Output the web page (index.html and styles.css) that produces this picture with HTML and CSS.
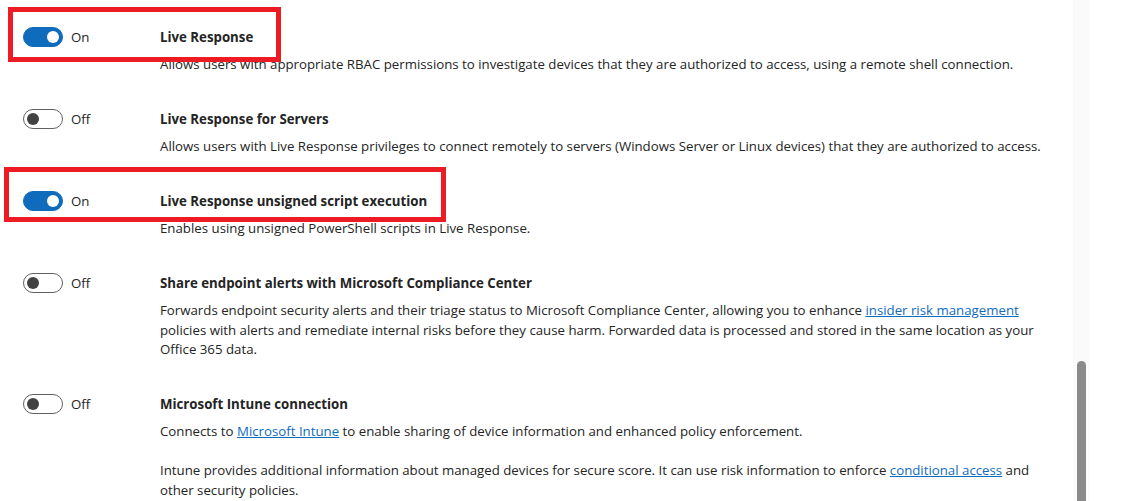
FILE: index.html
```html
<!DOCTYPE html>
<html lang="en">
<head>
<meta charset="utf-8">
<title>Advanced features</title>
<link rel="stylesheet" href="styles.css">
</head>
<body>
<div class="layout">
  <main class="settings">
    <section class="setting">
      <div class="highlight highlight-first"></div>
      <div class="switch-col">
        <span class="switch is-on"><span class="knob"></span></span>
        <span class="switch-label">On</span>
      </div>
      <div class="setting-body">
        <h3 class="setting-title">Live Response</h3>
        <p class="setting-desc">Allows users with appropriate RBAC permissions to investigate devices that they are authorized to access, using a remote shell connection.</p>
      </div>
    </section>

    <section class="setting">
      <div class="switch-col">
        <span class="switch"><span class="knob"></span></span>
        <span class="switch-label">Off</span>
      </div>
      <div class="setting-body">
        <h3 class="setting-title">Live Response for Servers</h3>
        <p class="setting-desc">Allows users with Live Response privileges to connect remotely to servers (Windows Server or Linux devices) that they are authorized to access.</p>
      </div>
    </section>

    <section class="setting">
      <div class="highlight highlight-second"></div>
      <div class="switch-col">
        <span class="switch is-on"><span class="knob"></span></span>
        <span class="switch-label">On</span>
      </div>
      <div class="setting-body">
        <h3 class="setting-title">Live Response unsigned script execution</h3>
        <p class="setting-desc">Enables using unsigned PowerShell scripts in Live Response.</p>
      </div>
    </section>

    <section class="setting">
      <div class="switch-col">
        <span class="switch"><span class="knob"></span></span>
        <span class="switch-label">Off</span>
      </div>
      <div class="setting-body">
        <h3 class="setting-title">Share endpoint alerts with Microsoft Compliance Center</h3>
        <p class="setting-desc">Forwards endpoint security alerts and their triage status to Microsoft Compliance Center, allowing you to enhance <a href="#">insider risk management</a> policies with alerts and remediate internal risks before they cause harm. Forwarded data is processed and stored in the same location as your Office 365 data.</p>
      </div>
    </section>

    <section class="setting">
      <div class="switch-col">
        <span class="switch"><span class="knob"></span></span>
        <span class="switch-label">Off</span>
      </div>
      <div class="setting-body">
        <h3 class="setting-title">Microsoft Intune connection</h3>
        <p class="setting-desc">Connects to <a href="#">Microsoft Intune</a> to enable sharing of device information and enhanced policy enforcement.</p>
        <p class="setting-desc setting-desc-extra">Intune provides additional information about managed devices for secure score. It can use risk information to enforce <a href="#">conditional access</a> and<br>other security policies.</p>
      </div>
    </section>
  </main>
  <div class="scrollbar"><div class="scroll-thumb"></div></div>
</div>
</body>
</html>
```
FILE: styles.css
```css
* { box-sizing: border-box; }
html, body {
  margin: 0;
  padding: 0;
  background: #ffffff;
  height: 100%;
  overflow: hidden;
}
body {
  font-family: "Segoe UI", "Open Sans", "Noto Sans", sans-serif;
  font-size: 13.25px;
  color: #242424;
}
.layout {
  display: flex;
  height: 501px;
}
.settings {
  flex: 1;
  padding: 27px 0 0 23px;
}
.setting {
  position: relative;
  display: flex;
  margin-bottom: 34.5px;
}
.switch-col {
  width: 137px;
  flex: none;
  display: flex;
  align-items: center;
  gap: 8px;
  height: 20px;
}
.switch {
  width: 40px;
  height: 20px;
  border-radius: 10px;
  border: 1px solid #616161;
  background: #ffffff;
  display: flex;
  align-items: center;
  padding: 0 3px;
}
.knob {
  width: 12px;
  height: 12px;
  border-radius: 50%;
  background: #424242;
}
.switch.is-on {
  background: #0f6cbd;
  border-color: #0f6cbd;
  justify-content: flex-end;
}
.switch.is-on .knob { background: #ffffff; }
.switch-label {
  line-height: 20px;
  color: #242424;
}
.setting-body {
  width: 895px;
}
.setting-title {
  margin: 0;
  font-size: 13.25px;
  font-weight: 700;
  line-height: 20px;
}
.setting-desc {
  margin: 8px 0 0;
  line-height: 19.5px;
}
.setting-desc-extra {
  margin-top: 19.5px;
}
.setting-desc a {
  color: #0f6cbd;
  text-decoration: underline;
}
.highlight {
  position: absolute;
  border: 5px solid #ed1c24;
  height: 55px;
  pointer-events: none;
}
.highlight-first {
  left: -15px;
  top: -20px;
  width: 273px;
}
.highlight-second {
  left: -19px;
  top: -24px;
  width: 442px;
}
.scrollbar {
  flex: none;
  width: 16px;
  margin-right: 42px;
  background: #fafafa;
  display: flex;
  flex-direction: column;
  justify-content: flex-end;
  align-items: center;
}
.scroll-thumb {
  width: 9px;
  height: 140px;
  background: #8a8a8a;
  border-radius: 5px 5px 0 0;
}
```
